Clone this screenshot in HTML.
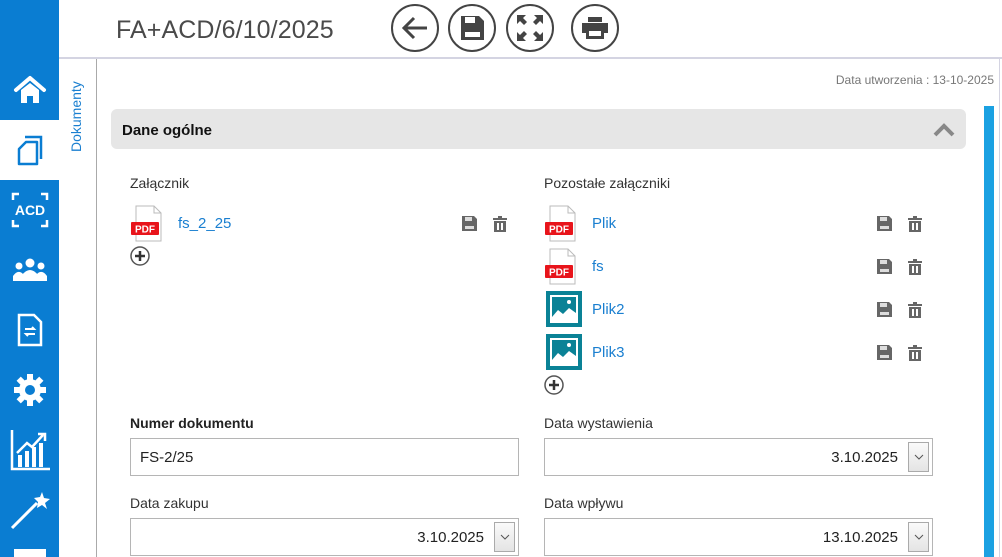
<!DOCTYPE html>
<html><head><meta charset="utf-8"><style>
*{margin:0;padding:0;box-sizing:border-box}
body{width:1002px;height:557px;overflow:hidden;background:#fff;font-family:"Segoe UI","Liberation Sans",sans-serif;position:relative;color:#222}
.abs{position:absolute}
.sb{left:0;top:0;width:59px;height:557px;background:#0a7dd2}
.it{position:absolute;left:0;width:59px;height:60px;display:flex;align-items:center;justify-content:center}
.lbl{font-size:14px;color:#333}
.link{color:#1a7fd0;font-size:15px}
.inp{position:absolute;height:38px;border:1px solid #b5b5b5;background:#fff;font-size:15px;color:#222;padding:10px 9px 0}
.dd{position:absolute;right:3px;top:3px;width:21px;height:30px;border:1px solid #aaa;background:linear-gradient(#fafafa,#e4e4e4);display:flex;align-items:center;justify-content:center}
</style></head><body>
<div class="abs sb"></div>
<div class="it" style="top:60px"><svg width="34" height="30" viewBox="0 0 34 30"><path d="M3 15L17 3L31 15" stroke="#fff" stroke-width="4" fill="none" stroke-linecap="round" stroke-linejoin="round"/><path d="M8 15V28H14V21H20V28H26V15L17 8Z" fill="#fff"/></svg></div>
<div class="it" style="top:120px;background:#fff"><svg width="30" height="34" viewBox="0 0 30 34"><path d="M10 4H26V26" stroke="#0a7dd2" stroke-width="2.5" fill="none"/><path d="M11 9H22V31H4V16Z" stroke="#0a7dd2" stroke-width="2.5" fill="none" stroke-linejoin="round"/></svg></div>
<div class="it" style="top:180px"><svg width="38" height="36" viewBox="0 0 38 36"><path d="M2 8V2H8M30 2H36V8M2 28V34H8M30 34H36V28" stroke="#fff" stroke-width="2.5" fill="none"/><text x="19" y="23" fill="#fff" font-family="Liberation Sans" font-weight="bold" font-size="14" text-anchor="middle">ACD</text></svg></div>
<div class="it" style="top:240px"><svg width="36" height="26" viewBox="0 0 36 26"><circle cx="18" cy="6" r="4.5" fill="#fff"/><circle cx="7" cy="9" r="3.5" fill="#fff"/><circle cx="29" cy="9" r="3.5" fill="#fff"/><path d="M10 24V18Q18 8 26 18V24Z" fill="#fff"/><path d="M1 24V19Q6 12 11 17V24ZM35 24V19Q30 12 25 17V24Z" fill="#fff"/></svg></div>
<div class="it" style="top:300px"><svg width="26" height="34" viewBox="0 0 26 34"><path d="M2 2H17L24 9V32H2Z" stroke="#fff" stroke-width="2.5" fill="none"/><path d="M8 16H17L15 14M18 21H9L11 23" stroke="#fff" stroke-width="2" fill="none"/></svg></div>
<div class="it" style="top:360px"><svg width="34" height="34" viewBox="0 0 34 34"><g fill="#fff"><circle cx="17" cy="17" r="11"/><rect x="14" y="1" width="6" height="32"/><rect x="1" y="14" width="32" height="6"/><rect x="14" y="1" width="6" height="32" transform="rotate(45 17 17)"/><rect x="14" y="1" width="6" height="32" transform="rotate(-45 17 17)"/></g><circle cx="17" cy="17" r="5" fill="#0a7dd2"/></svg></div>
<div class="it" style="top:420px"><svg width="40" height="42" viewBox="0 0 40 42"><path d="M2 1V40H40" stroke="#fff" stroke-width="2.5" fill="none"/><path d="M8 38V26h4v12zM15 38V22h4v16zM22 38V18h4v20zM29 38V14h4v24z" fill="#fff"/><path d="M7 24L17 14L22 18L33 6M28 5H35V12" stroke="#fff" stroke-width="2.5" fill="none"/></svg></div>
<div class="it" style="top:480px"><svg width="42" height="42" viewBox="0 0 42 42"><path d="M3 39L28 14" stroke="#fff" stroke-width="3"/><path d="M33 3L35 9L41 10L36 14L38 20L33 16L28 19L29 13L25 9L31 8Z" fill="#fff"/></svg></div>
<div class="abs" style="left:14px;top:549px;width:32px;height:8px;background:#fff"></div>

<div class="abs" style="left:116px;top:16px;font-size:25px;color:#4a4a4a;font-family:'Liberation Sans',sans-serif;letter-spacing:0.1px">FA+ACD/6/10/2025</div>
<svg class="abs" style="left:390px;top:4px" width="232" height="48" viewBox="0 0 232 48">
<g stroke="#444" stroke-width="2" fill="none"><circle cx="25" cy="24" r="23"/><circle cx="82" cy="24" r="23"/><circle cx="140" cy="24" r="23"/><circle cx="205" cy="24" r="23"/></g>
<path d="M14 24H37M24 14L14 24L24 34" stroke="#444" stroke-width="3" fill="none"/>
<path d="M71 12H89L94 17V36H71Z" fill="#444"/><rect x="75" y="13" width="10" height="6" fill="#fff"/><rect x="75" y="28" width="15" height="5" fill="#fff"/>
<g fill="#444"><path d="M127 11h9l-3 3 4 4-3 3-4-4-3 3z"/><path d="M153 11h-9l3 3-4 4 3 3 4-4 3 3z"/><path d="M127 37h9l-3-3 4-4-3-3-4 4-3-3z"/><path d="M153 37h-9l3-3-4-4 3-3 4 4 3-3z"/></g>
<path d="M198 13h14v5h-14z" fill="#444"/><path d="M192 19h26v10h-4v6h-18v-6h-4z" fill="#444"/><rect x="199" y="27" width="12" height="5" fill="#fff"/>
</svg>
<div class="abs" style="left:59px;top:57px;width:943px;height:2px;background:#d4d4e2"></div>
<div class="abs" style="left:96px;top:59px;width:1px;height:498px;background:#aaa"></div>
<div class="abs" style="left:999px;top:59px;width:1px;height:498px;background:#d4d4e2"></div>
<div class="abs" style="left:68px;top:152px;transform:rotate(-90deg);transform-origin:0 0;font-size:14px;color:#1a7fd0;white-space:nowrap;width:90px">Dokumenty</div>
<div class="abs" style="left:984px;top:106px;width:10px;height:451px;background:#1ba1e2"></div>

<div class="abs" style="right:8px;top:73px;font-size:12px;color:#777">Data utworzenia : 13-10-2025</div>
<div class="abs" style="left:111px;top:109px;width:855px;height:40px;background:#e6e6e6;border-radius:6px"></div>
<div class="abs" style="left:122px;top:122px;font-size:15px;font-weight:bold;color:#111">Dane ogólne</div>
<svg class="abs" style="left:933px;top:123px" width="22" height="14"><path d="M2 12L11 3L20 12" stroke="#888" stroke-width="4" fill="none"/></svg>

<div class="abs lbl" style="left:130px;top:175px">Załącznik</div>
<div class="abs lbl" style="left:544px;top:175px">Pozostałe załączniki</div>

<svg width="0" height="0" style="position:absolute"><defs>
<g id="pdf"><path d="M5 1H23L30 8V36H5Z" fill="#fff" stroke="#bbb"/><path d="M23 1V8H30" fill="none" stroke="#bbb"/><rect x="0" y="17" width="28" height="13" rx="1" fill="#e8141b"/><text x="14" y="27.5" fill="#fff" font-family="Liberation Sans" font-weight="bold" font-size="10" text-anchor="middle">PDF</text></g>
<g id="img"><rect x="0" y="0" width="36" height="36" fill="#0a8296"/><rect x="4" y="4" width="28" height="28" fill="#fff"/><rect x="6" y="6" width="24" height="20" fill="#0a8296"/><path d="M6 26L12 19L17 23L23 17L30 22V26Z" fill="#fff"/><circle cx="23" cy="11" r="2" fill="#fff"/></g>
<g id="act"><path d="M0 0H12L15 3V15H0Z" fill="#666"/><rect x="3" y="1" width="7" height="4" fill="#ddd"/><rect x="3" y="10" width="9" height="3" fill="#ddd"/><g transform="translate(31 0)" fill="#666"><rect x="0" y="2" width="14" height="2"/><rect x="5" y="0" width="4" height="2"/><path d="M1 5H13V16H1Z"/><rect x="4" y="7" width="2" height="7" fill="#fff"/><rect x="8" y="7" width="2" height="7" fill="#fff"/></g></g>
<g id="plus"><circle cx="10" cy="10" r="9" fill="#fff" stroke="#555" stroke-width="1.5"/><path d="M10 5V15M5 10H15" stroke="#333" stroke-width="2.5"/></g>
</defs></svg>

<svg class="abs" style="left:131px;top:205px" width="32" height="38"><use href="#pdf"/></svg>
<div class="abs link" style="left:178px;top:215px">fs_2_25</div>
<svg class="abs" style="left:462px;top:216px" width="48" height="17"><use href="#act"/></svg>
<svg class="abs" style="left:130px;top:246px" width="22" height="22"><use href="#plus"/></svg>

<svg class="abs" style="left:545px;top:205px" width="32" height="38"><use href="#pdf"/></svg>
<div class="abs link" style="left:592px;top:215px">Plik</div>
<svg class="abs" style="left:877px;top:216px" width="48" height="17"><use href="#act"/></svg>
<svg class="abs" style="left:545px;top:248px" width="32" height="38"><use href="#pdf"/></svg>
<div class="abs link" style="left:592px;top:258px">fs</div>
<svg class="abs" style="left:877px;top:259px" width="48" height="17"><use href="#act"/></svg>
<svg class="abs" style="left:546px;top:291px" width="36" height="36"><use href="#img"/></svg>
<div class="abs link" style="left:592px;top:301px">Plik2</div>
<svg class="abs" style="left:877px;top:302px" width="48" height="17"><use href="#act"/></svg>
<svg class="abs" style="left:546px;top:334px" width="36" height="36"><use href="#img"/></svg>
<div class="abs link" style="left:592px;top:344px">Plik3</div>
<svg class="abs" style="left:877px;top:345px" width="48" height="17"><use href="#act"/></svg>
<svg class="abs" style="left:544px;top:375px" width="22" height="22"><use href="#plus"/></svg>

<div class="abs lbl" style="left:130px;top:415px;font-weight:bold;color:#222">Numer dokumentu</div>
<div class="inp" style="left:130px;top:438px;width:389px">FS-2/25</div>
<div class="abs lbl" style="left:544px;top:415px">Data wystawienia</div>
<div class="inp" style="left:544px;top:438px;width:389px;text-align:right;padding-right:34px">3.10.2025<div class="dd"><svg width="10" height="6"><path d="M1 1L5 5L9 1" stroke="#555" fill="none"/></svg></div></div>
<div class="abs lbl" style="left:130px;top:495px">Data zakupu</div>
<div class="inp" style="left:130px;top:518px;width:389px;text-align:right;padding-right:34px">3.10.2025<div class="dd"><svg width="10" height="6"><path d="M1 1L5 5L9 1" stroke="#555" fill="none"/></svg></div></div>
<div class="abs lbl" style="left:544px;top:495px">Data wpływu</div>
<div class="inp" style="left:544px;top:518px;width:389px;text-align:right;padding-right:34px">13.10.2025<div class="dd"><svg width="10" height="6"><path d="M1 1L5 5L9 1" stroke="#555" fill="none"/></svg></div></div>
</body></html>
